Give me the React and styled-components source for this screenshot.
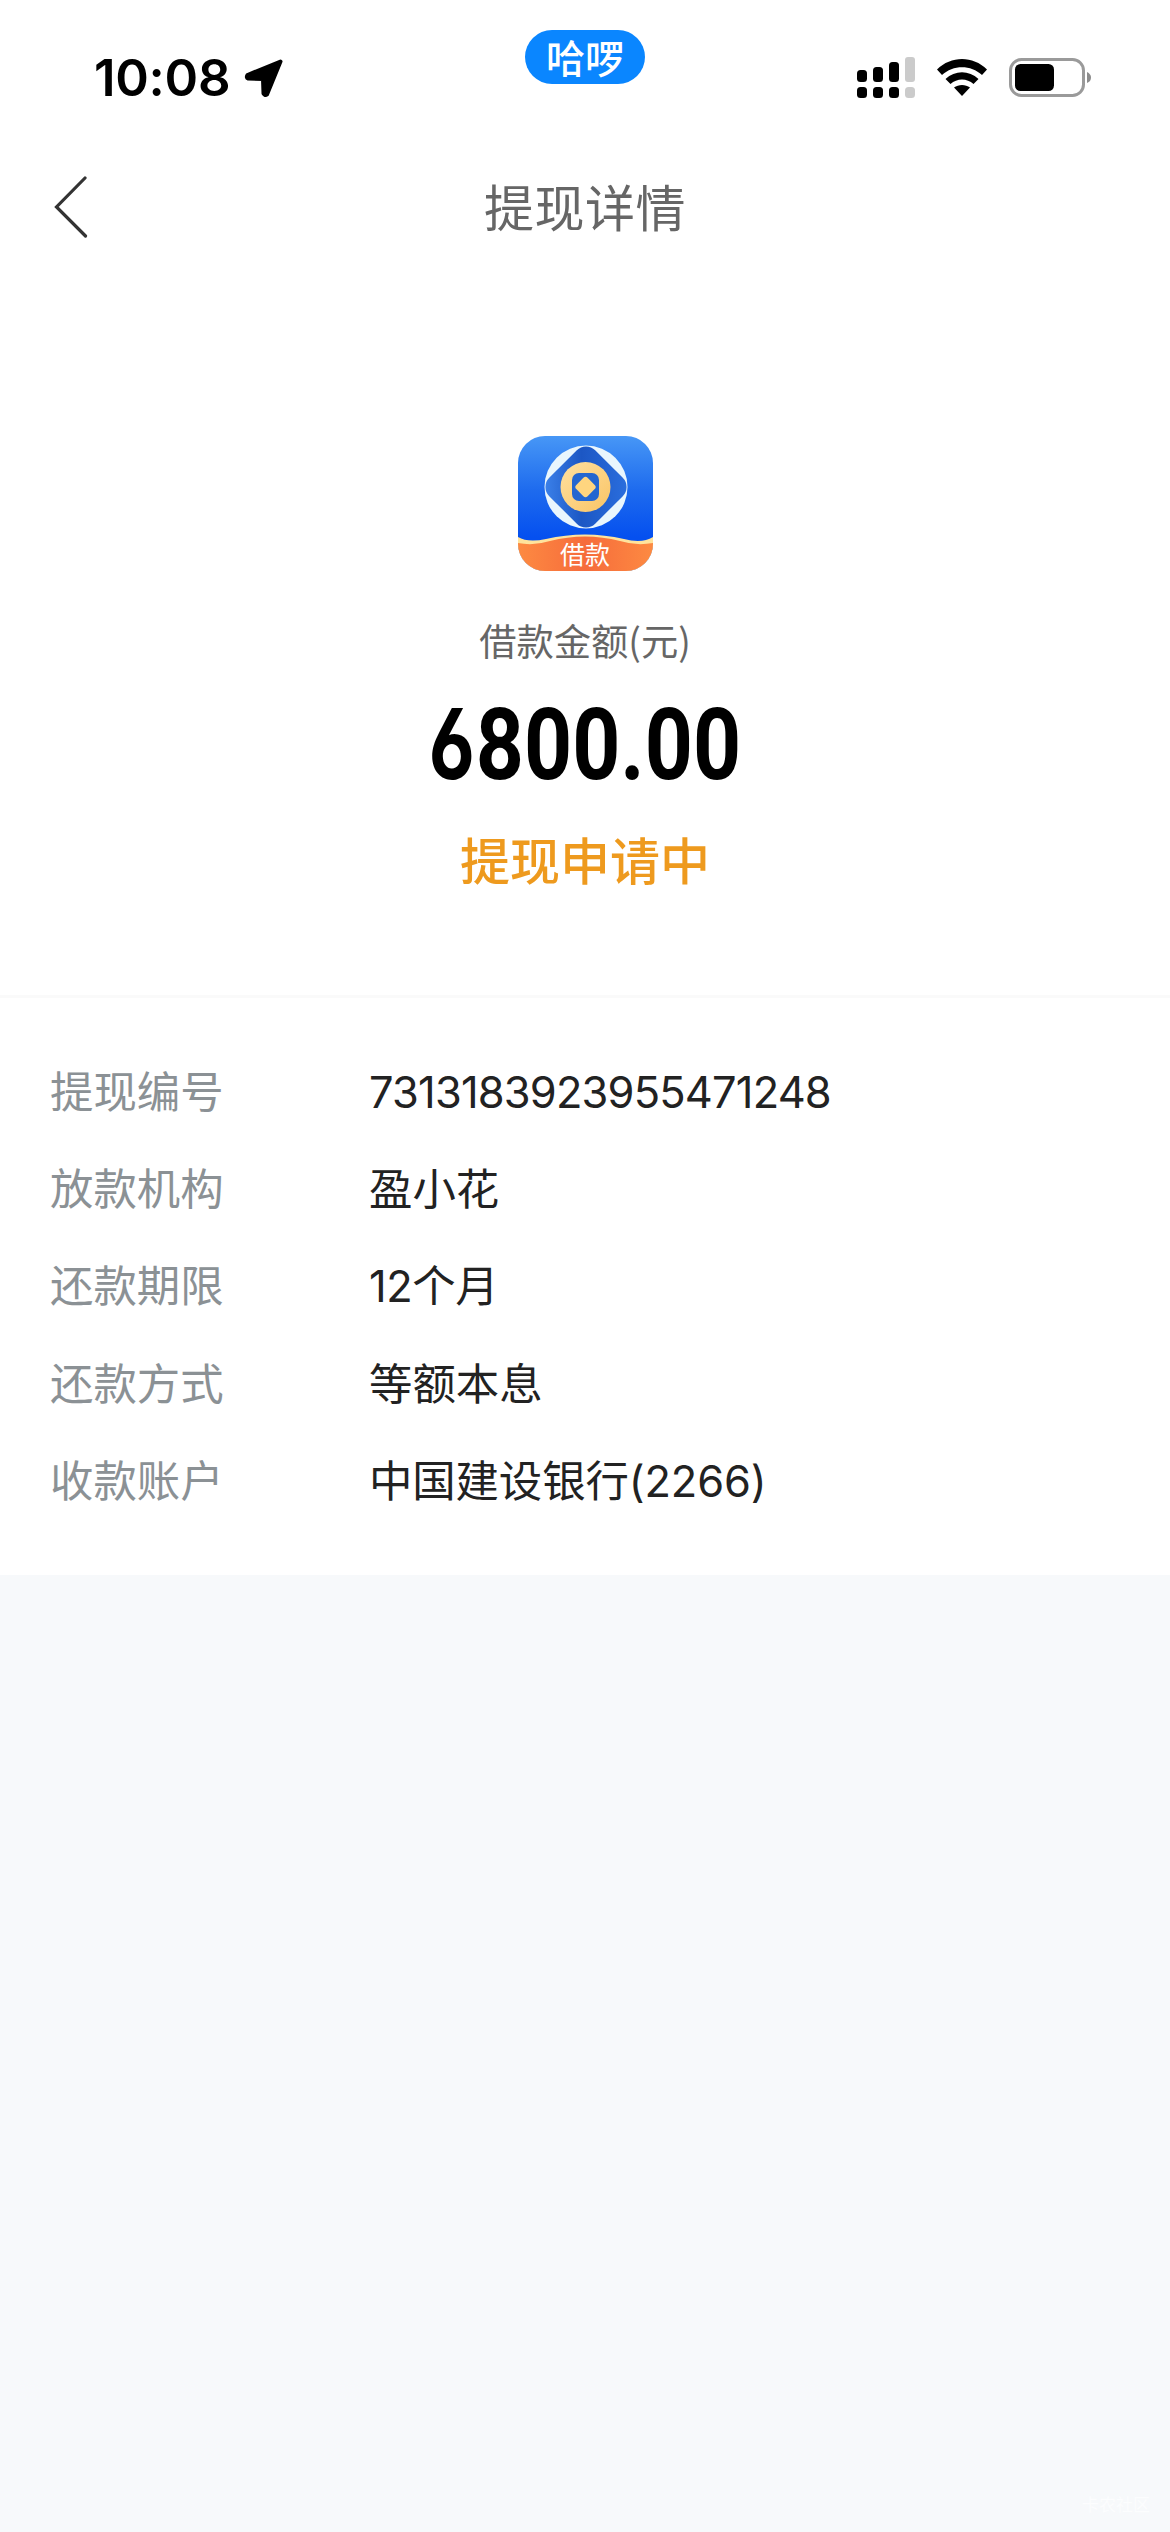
import styled, { createGlobalStyle } from 'styled-components';

const details = [
  { label: '提现编号', value: '7313183923955471248', spacing: '-0.8px' },
  { label: '放款机构', value: '盈小花' },
  { label: '还款期限', value: '12个月', spacing: '-0.4px' },
  { label: '还款方式', value: '等额本息' },
  { label: '收款账户', value: '中国建设银行(2266)', spacing: '-0.1px' }
];

const LocationIcon = () => (
  <svg width="40" height="40" viewBox="0 0 40 40">
    <path
      d="M36.500 3.500 L3.500 17 Q2 19.500 4 20.500 L19 21 L19.500 35.500 Q21 38 23 36.500 Z"
      fill="#000"
      stroke="#000"
      strokeWidth="4"
      strokeLinejoin="round"
    />
  </svg>
);

const SignalIcon = () => (
  <svg width="58" height="42" viewBox="0 0 58 42">
    <g fill="#000">
      <rect x="0" y="13" width="10" height="12" rx="3.500" />
      <rect x="16" y="10" width="10" height="15" rx="3.500" />
      <rect x="32" y="5" width="10" height="20" rx="3.500" />
      <rect x="0" y="30" width="10" height="11" rx="3.500" />
      <rect x="16" y="30" width="10" height="11" rx="3.500" />
      <rect x="32" y="30" width="10" height="11" rx="3.500" />
    </g>
    <g fill="#cbcbcb">
      <rect x="48" y="0" width="10" height="25" rx="3" />
      <rect x="48" y="30" width="10" height="11" rx="3.500" />
    </g>
  </svg>
);

const WifiIcon = () => (
  <svg width="50" height="40" viewBox="0 -2 50 40">
    <path d="M0 10.500 C14 -3.500 36 -3.500 50 10.500 L45 16 C34 5.500 16 5.500 5 16 Z" />
    <path d="M8.500 20 C18 11 32 11 41.500 20 L36.500 25 C30 19 20 19 13.500 25 Z" />
    <path d="M17 28.500 C21.500 25 28.500 25 33 28.500 L25 37 Z" />
  </svg>
);

const BatteryIcon = () => (
  <svg width="83" height="41" viewBox="0 -1 83 41">
    <rect x="1.500" y="1.500" width="73" height="36" rx="11" fill="none" stroke="#9a9a9a" strokeWidth="3" />
    <rect x="6" y="6" width="39" height="27" rx="5.500" />
    <path d="M78 14 Q82 16 82 19.500 Q82 23.500 78 25 Z" fill="#8c8c8c" />
  </svg>
);

const LogoIcon = () => (
  <svg width="135" height="135" viewBox="0 0 135 135">
    <defs>
      <linearGradient id="blue" x1="0" y1="0" x2="0" y2="1">
        <stop offset="0" stopColor="#4797f6" />
        <stop offset="0.400" stopColor="#1e6bee" />
        <stop offset="0.750" stopColor="#0550ef" />
      </linearGradient>
      <linearGradient id="orange" x1="0" y1="0" x2="1" y2="0">
        <stop offset="0" stopColor="#fd8a42" />
        <stop offset="0.500" stopColor="#f66c3b" />
        <stop offset="1" stopColor="#fd8a42" />
      </linearGradient>
      <linearGradient id="diamond" x1="0" y1="1" x2="1" y2="0">
        <stop offset="0" stopColor="#3f86ee" />
        <stop offset="0.450" stopColor="#1c57c4" />
        <stop offset="1" stopColor="#2c70e0" />
      </linearGradient>
      <linearGradient id="gold" x1="0" y1="0" x2="1" y2="1">
        <stop offset="0" stopColor="#ffe0a0" />
        <stop offset="1" stopColor="#f9c465" />
      </linearGradient>
      <clipPath id="tile">
        <rect width="135" height="135" rx="27" />
      </clipPath>
    </defs>
    <g clipPath="url(#tile)">
      <rect width="135" height="135" fill="url(#blue)" />
      <path d="M0 101 Q10 107 28 103 Q67 94 106 103 Q124 108 135 101 V135 H0 Z" fill="#ffe39c" />
      <path d="M0 107 Q16 110 32 105 Q67 96 102 105 Q118 110 135 107 V135 H0 Z" fill="url(#orange)" />
    </g>
    <circle cx="68" cy="51" r="41.500" fill="#e9f6fd" />
    <rect x="35.500" y="18.500" width="65" height="65" rx="13" fill="url(#diamond)" transform="rotate(45 68 51)" />
    <circle cx="67.500" cy="51" r="25" fill="url(#gold)" />
    <rect x="54" y="37" width="27" height="28" rx="7" fill="#2466d0" />
    <rect x="59.500" y="43" width="16" height="16" rx="3" fill="#ffd57f" transform="rotate(45 67.500 51)" />
  </svg>
);

const App = () => {
  return (
    <Page>
      <GlobalStyle />
      <StatusBar>
        <TimeBox>
          <Time>10:08</Time>
          <LocationIcon />
        </TimeBox>
        <AppPill>哈啰</AppPill>
        <StatusIcons>
          <SignalIcon />
          <WifiIcon />
          <BatteryIcon />
        </StatusIcons>
      </StatusBar>
      <NavBar>
        <BackBtn aria-label="返回">
          <svg width="34" height="62" viewBox="0 0 34 62">
            <path d="M31 2 L2.500 31 L31.500 60" fill="none" stroke="#333" strokeWidth="3.200" strokeLinecap="round" />
          </svg>
        </BackBtn>
        <Title>提现详情</Title>
      </NavBar>
      <Summary>
        <Logo>
          <LogoIcon />
          <LogoText>借款</LogoText>
        </Logo>
        <AmountLabel>借款金额(元)</AmountLabel>
        <Amount>
          <OpenDigit>6</OpenDigit>800.00
        </Amount>
        <Status>提现申请中</Status>
      </Summary>
      <DetailList>
        {details.map((item) => (
          <DetailRow key={item.label}>
            <Label>{item.label}</Label>
            <Value $spacing={item.spacing}>{item.value}</Value>
          </DetailRow>
        ))}
      </DetailList>
      <Footer>卡农社区</Footer>
    </Page>
  );
};

const GlobalStyle = createGlobalStyle`
  * {
    box-sizing: border-box;
  }
  body {
    margin: 0;
    font-family: Inter, 'Noto Sans CJK SC', sans-serif;
  }
  svg {
    display: block;
  }
`;

const Page = styled.div`
  display: flex;
  flex-direction: column;
  width: 1170px;
  height: 2532px;
  background-color: #f7f9fb;
  overflow: hidden;
`;

const StatusBar = styled.div`
  display: grid;
  grid-template-columns: 1fr 120px 1fr;
  height: 140px;
  background-color: #fff;
`;

const TimeBox = styled.div`
  display: flex;
  align-items: flex-start;
  gap: 15px;
  padding: 58px 0 0 94px;
`;

const Time = styled.span`
  width: 135px;
  font-size: 51px;
  font-weight: 600;
  line-height: 40px;
  letter-spacing: -0.3px;
  white-space: nowrap;
`;

const AppPill = styled.div`
  display: flex;
  justify-content: center;
  align-items: center;
  height: 54px;
  margin-top: 30px;
  border-radius: 27px;
  background-color: #0a86ff;
  color: #fff;
  font-family: 'Noto Sans CJK SC', sans-serif;
  font-size: 39px;
  font-weight: 500;
  line-height: 54px;
  padding-bottom: 2px;
`;

const StatusIcons = styled.div`
  display: flex;
  justify-content: flex-end;
  align-items: flex-start;
  gap: 22px;
  padding: 57px 78px 0 0;
`;

const NavBar = styled.div`
  display: grid;
  grid-template-columns: 200px 1fr 200px;
  align-items: center;
  height: 136px;
  background-color: #fff;
`;

const BackBtn = styled.button`
  width: 88px;
  padding: 0 0 2px 54px;
  border: none;
  background: none;
  cursor: pointer;
`;

const Title = styled.h1`
  margin: 0;
  padding-top: 2px;
  color: #666;
  font-size: 50px;
  font-weight: 400;
  letter-spacing: 0.5px;
  line-height: 60px;
  text-align: center;
`;

const Summary = styled.div`
  display: flex;
  flex-direction: column;
  align-items: center;
  height: 722px;
  padding-top: 160px;
  background-color: #fff;
  border-bottom: 3px solid #fafafa;
`;

const Logo = styled.div`
  position: relative;
  width: 135px;
  height: 135px;
`;

const LogoText = styled.span`
  position: absolute;
  left: 0;
  right: 0;
  top: 105px;
  color: #fff;
  font-size: 25px;
  line-height: 28px;
  text-align: center;
`;

const AmountLabel = styled.div`
  margin-top: 44px;
  color: #666;
  font-family: 'Noto Sans CJK SC', sans-serif;
  font-size: 37.3px;
  line-height: 50px;
`;

const Amount = styled.div`
  margin-top: 29px;
  font-family: Roboto, sans-serif;
  font-size: 100px;
  font-weight: 700;
  line-height: 100px;
  white-space: nowrap;
  transform: scaleX(0.84);
`;

/* the leading digit takes the straight-stemmed alternate */
const OpenDigit = styled.span`
  display: inline-block;
  width: 56px;
  font-family: Inter, sans-serif;
  font-size: 98px;
  font-weight: 650;
  line-height: 100px;
  font-feature-settings: 'cv03';
  transform: scaleX(0.91);
  transform-origin: left;
`;

const Status = styled.div`
  margin-top: 37px;
  color: #ee9a1e;
  font-size: 50px;
  font-weight: 500;
  line-height: 60px;
`;

const DetailList = styled.div`
  height: 577px;
  padding: 45px 50px 0;
  background-color: #fff;
`;

const DetailRow = styled.div`
  display: flex;
  align-items: center;
  height: 97.3px;
  font-size: 43.4px;
  line-height: 60px;
`;

const Label = styled.span`
  width: 319px;
  color: #8b9195;
`;

const Value = styled.span`
  color: #222;
  letter-spacing: ${({ $spacing }) => $spacing || 'normal'};
`;

const Footer = styled.footer`
  margin-top: auto;
  padding: 0 20px 14px;
  color: #fcfdfe;
  font-size: 17px;
  line-height: 26px;
  text-align: right;
`;

export default App;
